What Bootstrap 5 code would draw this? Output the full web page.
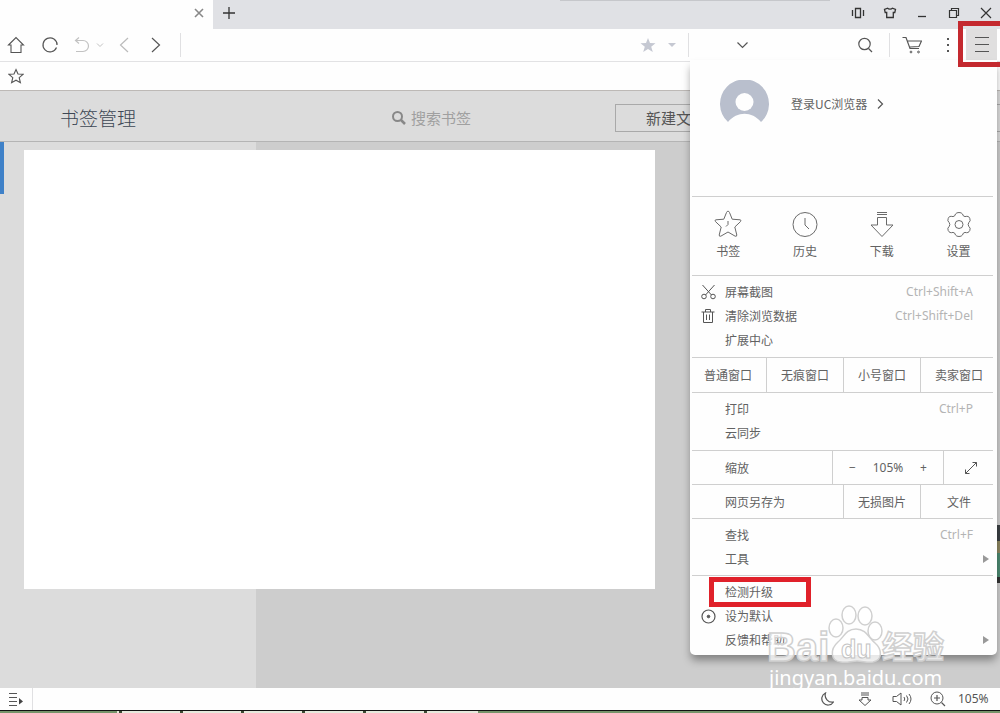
<!DOCTYPE html>
<html lang="zh-CN">
<head>
<meta charset="utf-8">
<meta name="viewport" content="width=device-width, initial-scale=1">
<title>书签管理</title>
<link href="https://cdn.jsdelivr.net/npm/bootstrap@5.3.0/dist/css/bootstrap.min.css" rel="stylesheet">
<style>
body{font-family:"Noto Sans","Noto Sans CJK SC",sans-serif;font-size:12px;line-height:24px;color:#555;background:#fefefe}
svg{display:block;fill:none;stroke:#555;stroke-width:1}
.icon-btn{display:flex;align-items:center;justify-content:center;padding:0;border:0;background:none;color:inherit;flex:none}
.light-text{font-family:"Noto Sans CJK SC",sans-serif;font-weight:300}

.tab-strip{height:29px;background:#e0e1e5}
.tab-strip::after{content:"";position:absolute;top:0;left:56%;width:27%;height:1px;background:#c6c7cb}
.page-tab{width:213px;background:#fefefe}
.win-btn{width:28px;height:26px}
.win-btn svg{stroke:#333}

.tool-row{height:33px;border-bottom:1px solid #e2e2e4}
.vline{width:1px;height:24px;background:#e0e0e2;flex:none}
.w-nav{width:32px}
.bare-input{border:0;outline:0;background:none;min-width:0}
.search-zone{width:312px}
.find-btn{margin-right:16px}
.cart-btn{padding:0 24px 0 12px}
.main-slot{margin-right:3px}
.main-btn{width:31px;height:31px;background:#e0dfdf}
.mark-frame{position:absolute;border:5px solid #c4292f;pointer-events:none}
.frame-top{inset:-8px -12px -7px -8px;z-index:30}

.fav-row{height:29px;border-bottom:1px solid #bdb9b6}

.page-head{height:51px;padding-top:4px;background:#dcdcdc;border-bottom:1px solid #b4b4b4}
.page-title{font-size:19px;line-height:24px;color:#3d4754;width:391px;padding-left:60px}
.find-input{font-size:15px;color:#999;width:204px}
.find-input::placeholder{color:#a0a0a0;opacity:1}
.new-btn{border:1px solid #a9a9a9;background:none;height:28px;font-size:15px;line-height:24px;color:#555;padding:0 30px;margin-right:-2px}
.page-area{background:#cdcdcd}
.side-pane{width:256px;background:#dcdcdc}
.side-pane::before{content:"";display:block;width:4px;height:52px;background:#3f81c8}
.blank-sheet{position:absolute;top:8px;left:24px;width:63.1%;bottom:99px;background:#fff}

.main-menu{position:absolute;top:100%;margin-top:-1px;right:3px;width:307px;background:#fefefe;z-index:20;border-radius:0 0 5px 5px;box-shadow:0 6px 9px -1px rgba(0,0,0,.38);color:#626262;font-family:"Noto Sans CJK SC",sans-serif}
.main-menu hr{margin:0 4px 0 2px;border:0;height:1px;background:#cfcfcf;opacity:1}
.account-box{height:136px;padding:20px 0 0 30px}
.account-link{margin:12px 0 0 22px}
.menu-item{display:flex;align-items:center;width:100%;height:24px;padding:0 24px 0 6px;border:0;background:none;color:inherit;text-align:left}
.menu-item .slot{width:24px;margin-right:5px;flex:none;display:flex;justify-content:center}
.menu-item kbd{margin-left:auto;padding:0;background:none;color:#b4b4b4;font-family:"Noto Sans",sans-serif;font-size:12px}
.menu-item .more{margin-left:auto;margin-right:-16px}
.menu-sec{padding:4px 0}
.menu-sec-last{padding:4px 0 3px}
.quick-btn{height:78px;padding:0;border:0;background:none;color:inherit}
.quick-btn svg{margin:0 auto 1px;stroke:#6a6a6a}
.cell-btn{height:34px;border:0;background:none;color:inherit;padding:0;flex:1 1 0}
.cell-row{height:33px}
.cell-row button{border:0;background:none;color:inherit;padding:0}
.rule-left{border-left:1px solid #cfcfcf!important}
.w-pic{width:77px}
.w-zoom{width:111px;font-family:"Noto Sans",sans-serif}
.w-full{width:54px}
.pad-tall{padding-bottom:5px}
.frame-item{inset:-3px 186px -3px 19px;border-color:#e0212a}

.brand-mark{position:absolute;right:50px;bottom:22px;width:190px;height:90px;z-index:40;pointer-events:none}
.brand-mark text{font-family:"Liberation Sans","Noto Sans CJK SC",sans-serif}
.brand-mark .site-name{font-family:"Noto Sans",sans-serif}

.status-row{height:22px}
.status-zoom{width:42px}
.gap-status{gap:24px}
.sound-btn{margin:0 18px 0 20px}
.task-strip{height:3px;background:linear-gradient(#111 1px,transparent 1px),repeating-linear-gradient(90deg,#e6e8dc 0 58px,#3c4a33 58px 61px);position:relative}
.task-strip::before,.task-strip::after{content:"";position:absolute;top:1px;bottom:0;background:#76936a}
.task-strip::before{left:0;width:117px}
.task-strip::after{left:478px;right:0}
.edge-gadget{position:absolute;right:0;bottom:130px;width:3px;height:58px;background:linear-gradient(#3b4044 16px,#8c8660 16px 28px,#4d8a72 28px 52px,#333 52px)}
</style>
</head>
<body>
<div class="d-flex flex-column vh-100 overflow-hidden position-relative">

  <header>
    <div class="tab-strip d-flex position-relative">
      <div class="page-tab d-flex justify-content-end align-items-center pe-2 pb-1">
        <button class="icon-btn" aria-label="关闭标签"><svg width="12" height="12"><path d="M2 2l8 8M10 2l-8 8" stroke="#888" stroke-width="1.600"/></svg></button>
      </div>
      <button class="icon-btn w-nav pb-1" aria-label="新标签"><svg width="14" height="14"><path d="M7 1v12M1 7h12" stroke="#333" stroke-width="1.300"/></svg></button>
      <div class="ms-auto d-flex gap-1">
        <button class="icon-btn win-btn" aria-label="侧栏"><svg width="14" height="12"><path d="M4.500 1.500h5v9h-5zM1.500 3v6M12.500 3v6" stroke-width="1.300"/></svg></button>
        <button class="icon-btn win-btn" aria-label="皮肤"><svg width="14" height="12"><path d="M4.500 1.200C5.500 2.500 8.500 2.500 9.500 1.200L12.500 2.500 11.800 5.500H10.300V10.500H3.700V5.500H2.200L1.500 2.500z" stroke-width="1.300"/></svg></button>
        <button class="icon-btn win-btn" aria-label="最小化"><svg width="14" height="12"><path d="M3 9.500h8" stroke-width="1.300"/></svg></button>
        <button class="icon-btn win-btn" aria-label="还原"><svg width="14" height="12"><path d="M2.500 3.500h7v7h-7zM4.500 3V1.500h7v7H10" stroke-width="1.200"/></svg></button>
        <button class="icon-btn win-btn" aria-label="关闭"><svg width="14" height="12"><path d="M2 1l10 10M12 1L2 11" stroke-width="1.200"/></svg></button>
      </div>
    </div>

    <div class="tool-row d-flex position-relative">
      <button class="icon-btn w-nav" aria-label="主页"><svg width="18" height="18"><path d="M1.500 9L9 1.500 16.500 9H14v7.500H4V9z" stroke-width="1.100"/></svg></button>
      <button class="icon-btn w-nav ps-1" aria-label="刷新"><svg width="18" height="18"><path d="M15.500 11.500A7 7 0 1 1 16 9V6.500" stroke-width="1.200"/></svg></button>
      <button class="icon-btn w-nav ps-1" aria-label="撤销"><svg width="16" height="18"><path d="M5 1.500L1.500 4.500 5 7.500M1.500 4.500H9a5.500 5.500 0 0 1 0 11H2" stroke="#c2c2c2" stroke-width="1.200"/></svg></button>
      <button class="icon-btn me-1" aria-label="更多撤销"><svg width="8" height="8"><path d="M1 2.500l3 3 3-3" stroke="#c2c2c2"/></svg></button>
      <button class="icon-btn w-nav" aria-label="后退"><svg width="10" height="18"><path d="M9 2L1.500 9 9 16" stroke="#bbb" stroke-width="1.200"/></svg></button>
      <button class="icon-btn w-nav me-2" aria-label="前进"><svg width="10" height="18"><path d="M1 2l7.500 7L1 16" stroke-width="1.200"/></svg></button>
      <span class="vline align-self-center"></span>
      <input class="bare-input flex-fill" type="text" aria-label="地址栏">
      <button class="icon-btn" aria-label="收藏"><svg width="16" height="16"><path d="M8 1l2 5 5.500.2-4.300 3.500L12.800 15 8 12 3.200 15l1.600-5.300L.500 6.200 6 6z" fill="#c5c8d2" stroke="none"/></svg></button>
      <button class="icon-btn mx-2 px-1" aria-label="收藏选项"><svg width="8" height="6"><path d="M0 1h8L4 5z" fill="#c5c8d2" stroke="none"/></svg></button>
      <div class="search-zone d-flex align-items-center">
        <span class="vline"></span>
        <button class="icon-btn ms-5" aria-label="搜索引擎"><svg width="11" height="8"><path d="M.500 1.500l5 5 5-5" stroke-width="1.200"/></svg></button>
        <input class="bare-input flex-fill" type="text" aria-label="搜索">
        <button class="icon-btn find-btn" aria-label="搜索"><svg width="15" height="16"><circle cx="6.500" cy="7" r="5.700" stroke-width="1.200"/><path d="M10.500 11.500l3.500 3.500" stroke-width="1.200"/></svg></button>
        <span class="vline"></span>
        <button class="icon-btn cart-btn" aria-label="购物车"><svg width="20" height="18"><path d="M.500 1.500H4l4 11h9M5.500 5h14l-2.500 5.500-9 .500" stroke-width="1.200"/><circle cx="9" cy="16" r=".900"/><circle cx="16.500" cy="16" r=".900"/></svg></button>
        <button class="icon-btn me-3" aria-label="更多"><svg width="4" height="16"><path d="M1 1h2v2H1zM1 7h2v2H1zM1 13h2v2H1z" fill="#555" stroke="none"/></svg></button>
        <div class="main-slot position-relative align-self-start">
          <button class="icon-btn main-btn" aria-label="菜单"><svg width="14" height="17"><path d="M0 1.500h14M0 8.500h14M0 15.500h14" stroke-width="1.200"/></svg></button>
          <span class="mark-frame frame-top"></span>
        </div>
      </div>

      <nav class="main-menu" aria-label="主菜单">
        <div class="account-box d-flex align-items-start">
          <svg width="49" height="49" viewBox="0 0 49 49"><path d="M8 42A24.500 24.500 0 1 1 41 42C32 31 17 31 8 42z" fill="#b9bfcd" stroke="none"/><circle cx="24.500" cy="22" r="9" fill="#fefefe" stroke="none"/></svg>
          <a href="#" class="account-link d-flex align-items-center gap-2 text-decoration-none text-reset">登录UC浏览器<svg width="10" height="10"><path d="M3 .500l4.500 4.500L3 9.500" stroke-width="1.200"/></svg></a>
        </div>
        <hr>
        <div class="d-flex">
          <button class="quick-btn col-3"><svg width="28" height="28"><path d="M14 1.200Q15 1.200 15.500 2.500L18.200 9.200 26 9.800Q27.800 10.200 26.500 11.600L20.800 17 22.800 25Q22.800 26.800 21.200 26.200L14 22 6.800 26.200Q5.200 26.800 5.200 25L7.200 17 1.500 11.600Q.200 10.200 2 9.800L9.800 9.200 12.500 2.500Q13 1.200 14 1.200zM14 11v3.500l-2 2"/></svg>书签</button>
          <button class="quick-btn col-3"><svg width="28" height="28"><circle cx="14" cy="14.500" r="12"/><path d="M14 8v7l4 4"/></svg>历史</button>
          <button class="quick-btn col-3"><svg width="28" height="28"><path d="M9 2.500h10M9 4.500h10M9.500 15V7.500h9V15h6.500L14 26.500 3 15z"/></svg>下载</button>
          <button class="quick-btn col-3"><svg width="28" height="28"><path d="M10.500 4Q11.500 2.500 14 2.500T17.500 4Q18 6.500 20 6.600 24 5.500 24.800 8.500 26 11 23.800 12.600 22.500 14.500 23.800 16.400 26 18 24.800 20.500 23.500 23.500 20 22.400 18 22.500 17.500 25 16.500 26.500 14 26.500T10.500 25Q10 22.500 8 22.400 4.500 23.500 3.200 20.500 2 18 4.200 16.400 5.500 14.500 4.200 12.600 2 11 3.200 8.500 4 5.500 8 6.600 10 6.500 10.500 4z"/><circle cx="14" cy="14.500" r="4"/></svg>设置</button>
        </div>
        <hr>
        <div class="menu-sec pad-tall">
          <button class="menu-item"><span class="slot"><svg width="15" height="16"><path d="M1.500 1l9 10M13.500 1l-9 10"/><circle cx="3" cy="12.500" r="2.300"/><circle cx="12" cy="12.500" r="2.300"/></svg></span>屏幕截图<kbd>Ctrl+Shift+A</kbd></button>
          <button class="menu-item"><span class="slot"><svg width="14" height="14"><path d="M.500 3h13M4.500 3V.500h5V3M2.500 3v10.500h9V3M5.500 5.500V11M8.500 5.500V11"/></svg></span>清除浏览数据<kbd>Ctrl+Shift+Del</kbd></button>
          <button class="menu-item"><span class="slot"></span>扩展中心</button>
        </div>
        <hr>
        <div class="d-flex">
          <button class="cell-btn">普通窗口</button>
          <button class="cell-btn rule-left">无痕窗口</button>
          <button class="cell-btn rule-left">小号窗口</button>
          <button class="cell-btn rule-left">卖家窗口</button>
        </div>
        <hr>
        <div class="menu-sec pad-tall">
          <button class="menu-item"><span class="slot"></span>打印<kbd>Ctrl+P</kbd></button>
          <button class="menu-item"><span class="slot"></span>云同步</button>
        </div>
        <hr>
        <div class="cell-row d-flex">
          <div class="flex-fill d-flex align-items-center"><div class="menu-item"><span class="slot"></span>缩放</div></div>
          <div class="w-zoom rule-left d-flex align-items-center justify-content-between px-3"><button aria-label="缩小">−</button><span>105%</span><button aria-label="放大">+</button></div>
          <button class="icon-btn w-full rule-left" aria-label="全屏"><svg width="14" height="14"><path d="M1.500 12.500l11-11M8.500 1.500h4v4M1.500 8.500v4h4"/></svg></button>
        </div>
        <hr>
        <div class="cell-row d-flex">
          <div class="flex-fill d-flex align-items-center"><div class="menu-item"><span class="slot"></span>网页另存为</div></div>
          <button class="w-pic rule-left">无损图片</button>
          <button class="w-pic rule-left">文件</button>
        </div>
        <hr>
        <div class="menu-sec">
          <button class="menu-item"><span class="slot"></span>查找<kbd>Ctrl+F</kbd></button>
          <button class="menu-item"><span class="slot"></span>工具<svg class="more" width="6" height="8"><path d="M0 0l6 4-6 4z" fill="#999" stroke="none"/></svg></button>
        </div>
        <hr>
        <div class="menu-sec-last">
          <div class="position-relative">
            <button class="menu-item"><span class="slot"></span>检测升级</button>
            <span class="mark-frame frame-item"></span>
          </div>
          <button class="menu-item"><span class="slot"><svg width="15" height="15"><circle cx="7.500" cy="7.500" r="6.500" stroke-width="1.200"/><circle cx="7.500" cy="7.500" r="1.300" fill="#555"/></svg></span>设为默认</button>
          <button class="menu-item"><span class="slot"></span>反馈和帮助<svg class="more" width="6" height="8"><path d="M0 0l6 4-6 4z" fill="#999" stroke="none"/></svg></button>
        </div>
      </nav>
    </div>

    <div class="fav-row d-flex">
      <button class="icon-btn w-nav" aria-label="收藏夹"><svg width="16" height="16"><path d="M8 1.500l2 4.500 5 .300-3.800 3.400 1.200 5L8 12.200l-4.400 2.500 1.200-5L1 6.300 6 6z" stroke-width="1.100"/></svg></button>
    </div>
  </header>

  <div class="page-head d-flex align-items-center light-text">
    <h1 class="page-title m-0 light-text">书签管理</h1>
    <label class="d-flex align-items-center gap-1">
      <svg width="16" height="16"><circle cx="6.500" cy="6.500" r="4.500" stroke="#888" stroke-width="2"/><path d="M10 10l4 4" stroke="#888" stroke-width="2.500"/></svg>
      <input class="bare-input find-input p-0" type="text" placeholder="搜索书签" aria-label="搜索书签">
    </label>
    <button class="new-btn flex-fill text-start">新建文件夹</button>
  </div>

  <main class="page-area flex-fill d-flex position-relative">
    <aside class="side-pane"></aside>
    <div class="blank-sheet"></div>
  </main>

  <footer>
    <div class="status-row d-flex align-items-center">
      <button class="icon-btn w-nav" aria-label="侧边栏"><svg width="14" height="14"><path d="M0 1.500h8M0 5.500h8M0 9.500h8M0 13.500h8" stroke-width="1.200"/><path d="M10 6l4 3.500-4 3z" fill="#444" stroke="none"/></svg></button>
      <span class="vline"></span>
      <div class="ms-auto d-flex align-items-center">
        <div class="d-flex gap-status">
          <button class="icon-btn" aria-label="夜间模式"><svg width="14" height="14"><path d="M5.500 1A6.300 6.300 0 1 0 13.500 10 7 7 0 0 1 5.500 1z" stroke-width="1.200"/></svg></button>
          <button class="icon-btn" aria-label="下载"><svg width="14" height="14"><path d="M3 1h8M3 3h8M4 8V5.500h6V8h3L7 13.500 1 8z"/></svg></button>
        </div>
        <button class="icon-btn sound-btn" aria-label="声音"><svg width="20" height="14"><path d="M1 4.500h3.500L9 1v12L4.500 9.500H1zM12 5q1.500 2 0 4M14.500 3.500q3 3.500 0 7M17 2q4 5 0 10"/></svg></button>
        <button class="icon-btn me-2 pe-1" aria-label="缩放"><svg width="16" height="16"><circle cx="7" cy="7" r="6"/><path d="M7 4v6M4 7h6M11.500 11.500l3.500 3.500" stroke-width="1.200"/></svg></button>
        <span class="status-zoom">105%</span>
      </div>
    </div>
    <div class="task-strip"></div>
  </footer>

  <span class="edge-gadget"></span>
  <svg class="brand-mark" viewBox="0 0 190 90" aria-hidden="true">
    <g fill="#fff" fill-opacity=".800" stroke="#d0d0d0" stroke-width="1.500">
      <ellipse cx="76" cy="27" rx="7" ry="9"/><ellipse cx="89" cy="14" rx="7" ry="9"/><ellipse cx="105" cy="15" rx="7" ry="9"/><ellipse cx="115" cy="30" rx="7" ry="9"/>
      <path d="M96 28C86 28 84 36 78 41 70 48 70 60 81 61 88 62 91 60 97 60 103 60 107 62 113 61 123 59 122 48 115 42 109 37 106 28 96 28z"/>
      <text x="7" y="60" font-size="40" font-weight="700">Bai</text>
      <text x="122" y="57" font-size="31" font-weight="700">经验</text>
    </g>
    <text x="81" y="57" font-size="25" font-weight="700" fill="#fff" stroke="#c4c4c4">du</text>
    <text class="site-name" x="9" y="84" font-size="20" fill="#fff" stroke="none">jingyan.baidu.com</text>
  </svg>
</div>
<script src="https://cdn.jsdelivr.net/npm/bootstrap@5.3.0/dist/js/bootstrap.bundle.min.js"></script>
</body>
</html>
